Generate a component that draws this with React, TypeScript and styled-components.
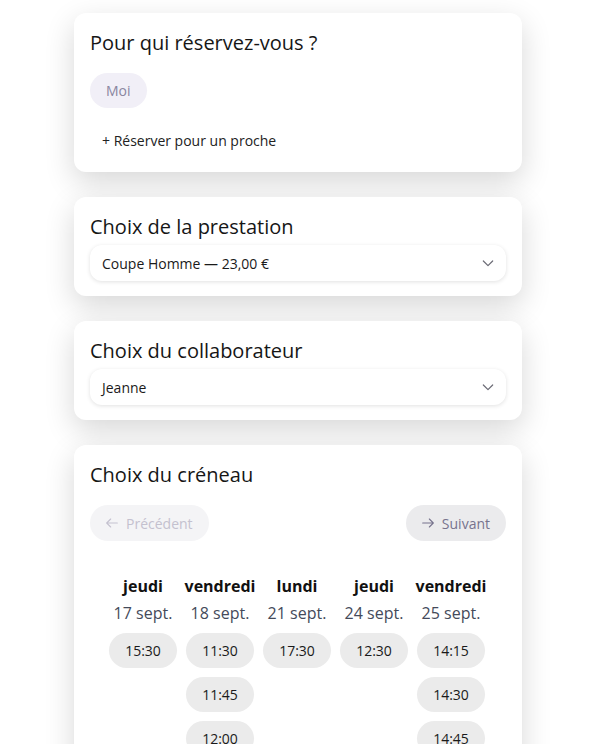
import React from 'react';
import styled, { createGlobalStyle } from 'styled-components';

const GlobalStyle = createGlobalStyle`
    html, body {
        margin: 0;
        padding: 0;
        background: #ffffff;
        font-family: 'Open Sans', 'Noto Sans', sans-serif;
        color: #1a1a1a;
    }
`;

const days = [
    { name: 'jeudi', date: '17 sept.', slots: ['15:30'] },
    { name: 'vendredi', date: '18 sept.', slots: ['11:30', '11:45', '12:00'] },
    { name: 'lundi', date: '21 sept.', slots: ['17:30'] },
    { name: 'jeudi', date: '24 sept.', slots: ['12:30'] },
    { name: 'vendredi', date: '25 sept.', slots: ['14:15', '14:30', '14:45'] },
];

const Chevron = () => (
    <svg width='16' height='16' viewBox='0 0 24 24' fill='none' stroke='#6b6b75' strokeWidth='1.8' strokeLinecap='round' strokeLinejoin='round'>
        <path d='M5 9l7 7 7-7' />
    </svg>
);

const Arrow = ({ left }: { left?: boolean }) => (
    <svg width='16' height='16' viewBox='0 0 24 24' fill='none' stroke='currentColor' strokeWidth='1.6' strokeLinecap='round' strokeLinejoin='round'>
        {left ? <path d='M20 12H4M10 6l-6 6 6 6' /> : <path d='M4 12h16M14 6l6 6-6 6' />}
    </svg>
);

const App = () => {
    return (
        <>
            <GlobalStyle />
            <Page>
                <Column>
                    <Card>
                        <Title>Pour qui réservez-vous ?</Title>
                        <Chips>
                            <Chip>Moi</Chip>
                        </Chips>
                        <AddButton>+ Réserver pour un proche</AddButton>
                    </Card>
                    <Card>
                        <Title>Choix de la prestation</Title>
                        <Select>
                            <span>Coupe Homme — 23,00 €</span>
                            <Chevron />
                        </Select>
                    </Card>
                    <Card>
                        <Title>Choix du collaborateur</Title>
                        <Select>
                            <span>Jeanne</span>
                            <Chevron />
                        </Select>
                    </Card>
                    <Card>
                        <Title>Choix du créneau</Title>
                        <NavRow>
                            <NavButton disabled>
                                <Arrow left />
                                Précédent
                            </NavButton>
                            <NavButton>
                                <Arrow />
                                Suivant
                            </NavButton>
                        </NavRow>
                        <Days>
                            {days.map((d, i) => (
                                <Day key={i}>
                                    <DayName>{d.name}</DayName>
                                    <DayDate>{d.date}</DayDate>
                                    <Slots>
                                        {d.slots.map((s) => (
                                            <Slot key={s}>{s}</Slot>
                                        ))}
                                    </Slots>
                                </Day>
                            ))}
                        </Days>
                    </Card>
                </Column>
            </Page>
        </>
    );
};

const Page = styled.div`
    display: flex;
    justify-content: center;
    padding: 13px 7px 40px 0;
`;

const Column = styled.div`
    width: 448px;
    display: flex;
    flex-direction: column;
    gap: 25px;
`;

const Card = styled.div`
    background: #ffffff;
    border-radius: 12px;
    padding: 16px 16px 15px;
    box-shadow: 0 10px 30px rgba(0, 0, 0, 0.16);
    display: flex;
    flex-direction: column;
`;

const Title = styled.h2`
    margin: 0;
    font-size: 20px;
    line-height: 28px;
    font-weight: 400;
    color: #161616;
`;

const Chips = styled.div`
    display: flex;
    gap: 8px;
    margin-top: 16px;
`;

const Chip = styled.button`
    height: 35px;
    padding: 0 16px;
    border: none;
    border-radius: 18px;
    background: #f1eff7;
    color: #8a86a0;
    font-family: inherit;
    font-size: 14px;
`;

const AddButton = styled.button`
    align-self: flex-start;
    margin-top: 14px;
    margin-bottom: -1px;
    height: 36px;
    padding: 0 12px;
    border: none;
    background: transparent;
    color: #222;
    font-family: inherit;
    font-size: 14px;
`;

const Select = styled.div`
    margin-top: 4px;
    height: 36px;
    padding: 0 10px 0 12px;
    border-radius: 12px;
    background: #fff;
    box-shadow: 0 1px 4px rgba(0, 0, 0, 0.12);
    display: flex;
    align-items: center;
    justify-content: space-between;
    font-size: 14px;
    color: #1a1a1a;
`;

const NavRow = styled.div`
    display: flex;
    justify-content: space-between;
    margin-top: 16px;
`;

const NavButton = styled.button`
    height: 36px;
    padding: 0 16px 0 14px;
    border: none;
    border-radius: 18px;
    display: flex;
    align-items: center;
    gap: 6px;
    font-family: inherit;
    font-size: 14px;
    background: ${(p) => (p.disabled ? '#f4f4f6' : '#ebebed')};
    color: ${(p) => (p.disabled ? '#c4c1cf' : '#77738d')};
`;

const Days = styled.div`
    display: grid;
    grid-template-columns: repeat(5, 68px);
    column-gap: 9px;
    justify-content: center;
    margin-top: 33px;
    padding-right: 2px;
`;

const Day = styled.div`
    display: flex;
    flex-direction: column;
    align-items: center;
`;

const DayName = styled.div`
    font-size: 16px;
    line-height: 24px;
    font-weight: 700;
    color: #111;
    white-space: nowrap;
`;

const DayDate = styled.div`
    margin-top: 3px;
    font-size: 16px;
    line-height: 24px;
    color: #444a5a;
    white-space: nowrap;
`;

const Slots = styled.div`
    display: flex;
    flex-direction: column;
    gap: 9px;
    margin-top: 8px;
`;

const Slot = styled.button`
    width: 68px;
    height: 35px;
    border: none;
    border-radius: 18px;
    background: #ebebeb;
    color: #1a1a1a;
    font-family: inherit;
    font-size: 14px;
`;

export default App;
